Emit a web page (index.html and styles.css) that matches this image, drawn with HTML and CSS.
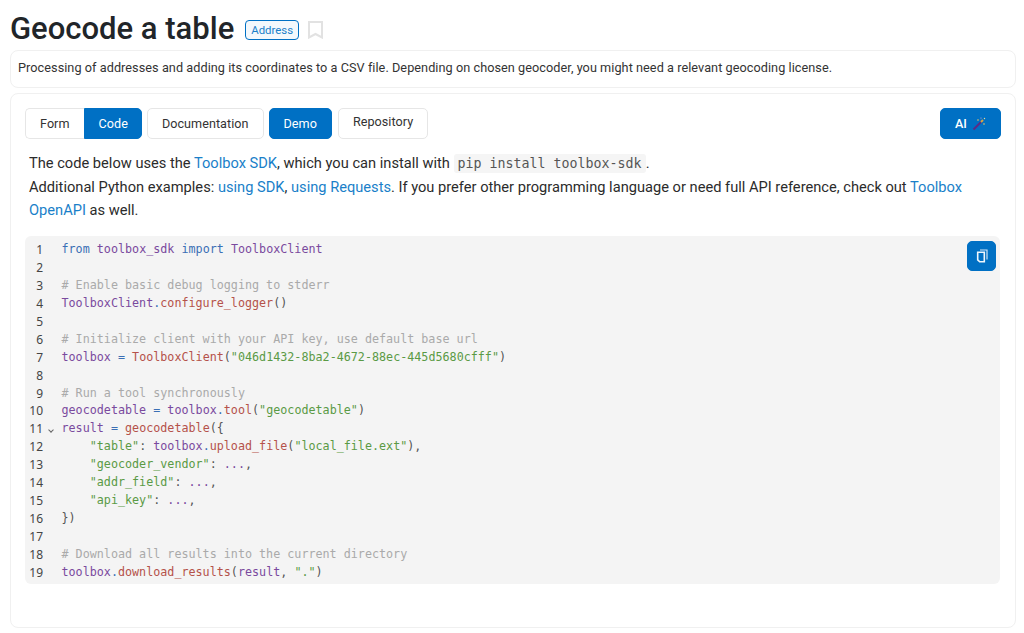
FILE: index.html
```html
<!DOCTYPE html>
<html lang="en">
<head>
  <meta charset="UTF-8" />
  <title>Geocode a table</title>
  <link rel="stylesheet" href="styles.css">
</head>
<body>
  <header class="title-row">
    <h1>Geocode a table</h1>
    <span class="tag">Address</span>
    <svg class="bookmark" width="15" height="18" viewBox="0 0 15 18"><path d="M1 1h13v15.5L7.5 13 1 16.5z" fill="none" stroke="#e2e2e2" stroke-width="2"/></svg>
  </header>

  <div class="card desc">Processing of addresses and adding its coordinates to a CSV file. Depending on chosen geocoder, you might need a relevant geocoding license.</div>

  <main class="card tool">
    <div class="toolbar">
      <div class="group">
        <a class="button group-first">Form</a>
        <a class="button primary group-last">Code</a>
      </div>
      <a class="button">Documentation</a>
      <a class="button primary">Demo</a>
      <a class="button repo">Repository</a>
      <a class="button primary ai">AI
        <svg width="14" height="14" viewBox="0 0 14 14"><path d="M1.5 12.5L9 5" stroke="#5b2a86" stroke-width="2"/><path d="M9 5l2-2" stroke="#d9a441" stroke-width="2"/><circle cx="6" cy="3" r=".8" fill="#e8c468"/><circle cx="12" cy="7" r=".8" fill="#e8c468"/><circle cx="12.5" cy="1.5" r=".7" fill="#f0d890"/><circle cx="9" cy="1" r=".6" fill="#c9a0dc"/></svg>
      </a>
    </div>

    <p class="intro">The code below uses the <a href="#">Toolbox SDK</a>, which you can install with <code>pip install toolbox-sdk</code>.<br>
    Additional Python examples: <a href="#">using SDK</a>, <a href="#">using Requests</a>. If you prefer other programming language or need full API reference, check out <a href="#">Toolbox</a><br>
    <a href="#">OpenAPI</a> as well.</p>

    <div class="editor">
      <a class="button primary copy">
        <svg width="12" height="14" viewBox="0 0 12 14"><path d="M4 1h7v9.5" fill="none" stroke="#cfe4f5" stroke-width="1.2"/><path d="M1.7 3.2h6.6v9.6H3.7l-2-2z" fill="none" stroke="#eef6fc" stroke-width="1.6"/></svg>
      </a>
      <div class="line"><span class="num">1</span><span class="src"><i>from</i> <b>toolbox_sdk</b> <i>import</i> <b>ToolboxClient</b></span></div>
      <div class="line"><span class="num">2</span></div>
      <div class="line"><span class="num">3</span><span class="src"><s># Enable basic debug logging to stderr</s></span></div>
      <div class="line"><span class="num">4</span><span class="src"><b>ToolboxClient</b><i>.</i><u>configure_logger</u>()</span></div>
      <div class="line"><span class="num">5</span></div>
      <div class="line"><span class="num">6</span><span class="src"><s># Initialize client with your API key, use default base url</s></span></div>
      <div class="line"><span class="num">7</span><span class="src"><b>toolbox</b> <i>=</i> <u>ToolboxClient</u>(<em>"046d1432-8ba2-4672-88ec-445d5680cfff"</em>)</span></div>
      <div class="line"><span class="num">8</span></div>
      <div class="line"><span class="num">9</span><span class="src"><s># Run a tool synchronously</s></span></div>
      <div class="line"><span class="num">10</span><span class="src"><b>geocodetable</b> <i>=</i> <b>toolbox</b><i>.</i><u>tool</u>(<em>"geocodetable"</em>)</span></div>
      <div class="line"><span class="num fold">11</span><span class="src"><b>result</b> <i>=</i> <u>geocodetable</u>({</span></div>
      <div class="line"><span class="num">12</span><span class="src">    <em>"table"</em>: <b>toolbox</b><i>.</i><u>upload_file</u>(<em>"local_file.ext"</em>),</span></div>
      <div class="line"><span class="num">13</span><span class="src">    <em>"geocoder_vendor"</em>: <b>...</b>,</span></div>
      <div class="line"><span class="num">14</span><span class="src">    <em>"addr_field"</em>: <b>...</b>,</span></div>
      <div class="line"><span class="num">15</span><span class="src">    <em>"api_key"</em>: <b>...</b>,</span></div>
      <div class="line"><span class="num">16</span><span class="src">})</span></div>
      <div class="line"><span class="num">17</span></div>
      <div class="line"><span class="num">18</span><span class="src"><s># Download all results into the current directory</s></span></div>
      <div class="line"><span class="num">19</span><span class="src"><b>toolbox</b><i>.</i><u>download_results</u>(<b>result</b>, <em>"."</em>)</span></div>
    </div>
  </main>
</body>
</html>
```

FILE: styles.css
```css
body {
  margin: 0;
  height: 633px;
  overflow: hidden;
  background: #fff;
  color: #212529;
  font-family: Roboto, "Liberation Sans", sans-serif;
  font-size: 14px;
  box-sizing: border-box;
  padding: 7px 8px 0 10px;
}
a {
  color: #1a7fc9;
  text-decoration: none;
}
.title-row {
  display: flex;
  align-items: center;
  height: 43px;
}
h1 {
  margin: 0;
  font-size: 31px;
  font-weight: 500;
  color: #212529;
}
.tag {
  margin-left: 11px;
  margin-top: 3px;
  padding: 0 5px;
  height: 18px;
  line-height: 18px;
  border: 1px solid #0070c4;
  border-radius: 4px;
  background: #f3f8fc;
  color: #1a7fc9;
  font-size: 11.4px;
}
.bookmark {
  margin-left: 9px;
  margin-top: 3px;
}
.card {
  border: 1px solid #f0f0f0;
  border-radius: 8px;
}
.desc {
  height: 38px;
  line-height: 34px;
  padding: 0 7px;
  box-sizing: border-box;
  font-size: 12.7px;
  color: #333;
  letter-spacing: 0.05px;
}
.tool {
  margin-top: 5px;
  height: 535px;
  box-sizing: border-box;
  padding: 14px 15px 14px 14px;
}
.toolbar {
  display: flex;
  gap: 5px;
}
.group {
  display: flex;
}
.button {
  display: block;
  height: 29px;
  line-height: 29px;
  padding: 0 14px;
  border: 1px solid #e6e6e6;
  border-radius: 5px;
  background: #fff;
  color: #333;
  font-size: 12.6px;
  letter-spacing: 0.05px;
}
.primary {
  background: #0070c4;
  border-color: #0070c4;
  color: #fff;
}
.group-first {
  border-radius: 5px 0 0 5px;
  border-right: 0;
}
.group-last {
  padding-right: 13px;
  border-radius: 0 5px 5px 0;
}
.repo {
  margin-left: 1px;
  line-height: 26px;
}
.ai {
  margin-left: auto;
  margin-right: -1px;
  display: flex;
  align-items: center;
  gap: 5px;
  font-weight: 500;
}
.intro {
  margin: 13px 0 0 4px;
  font-size: 14.65px;
  line-height: 23.5px;
  color: #2b2b2b;
}
code {
  font-family: "DejaVu Sans Mono", monospace;
  font-size: 13.3px;
  background: #f5f5f5;
  color: #555;
  padding: 2px 4px;
  border-radius: 3px;
}
.editor {
  position: relative;
  margin-top: 13.5px;
  height: 348px;
  box-sizing: border-box;
  padding-top: 5px;
  background: #f4f4f4;
  border-radius: 6px;
  font-family: "DejaVu Sans Mono", monospace;
  font-size: 11.72px;
  line-height: 17.94px;
  color: #555;
}
.copy {
  position: absolute;
  top: 5px;
  right: 4px;
  width: 27px;
  height: 28px;
  padding: 0;
  display: flex;
  align-items: center;
  justify-content: center;
}
.line {
  display: flex;
  height: 17.94px;
  white-space: pre;
}
.num {
  width: 18px;
  margin-right: 18.5px;
  flex: none;
  text-align: right;
  color: #444;
  font-family: "Noto Sans", sans-serif;
  font-size: 12px;
}
.fold {
  position: relative;
}
.fold::after {
  content: "";
  position: absolute;
  right: -10px;
  top: 8px;
  width: 3px;
  height: 3px;
  border-right: 1px solid #666;
  border-bottom: 1px solid #666;
  transform: rotate(45deg);
}
.src i { font-style: normal; color: #3b6fb5; }
.src b { font-weight: 400; color: #7a4a9e; }
.src u { text-decoration: none; color: #b5524a; }
.src em { font-style: normal; color: #5a9a45; }
.src s { text-decoration: none; color: #aaa; }
```
